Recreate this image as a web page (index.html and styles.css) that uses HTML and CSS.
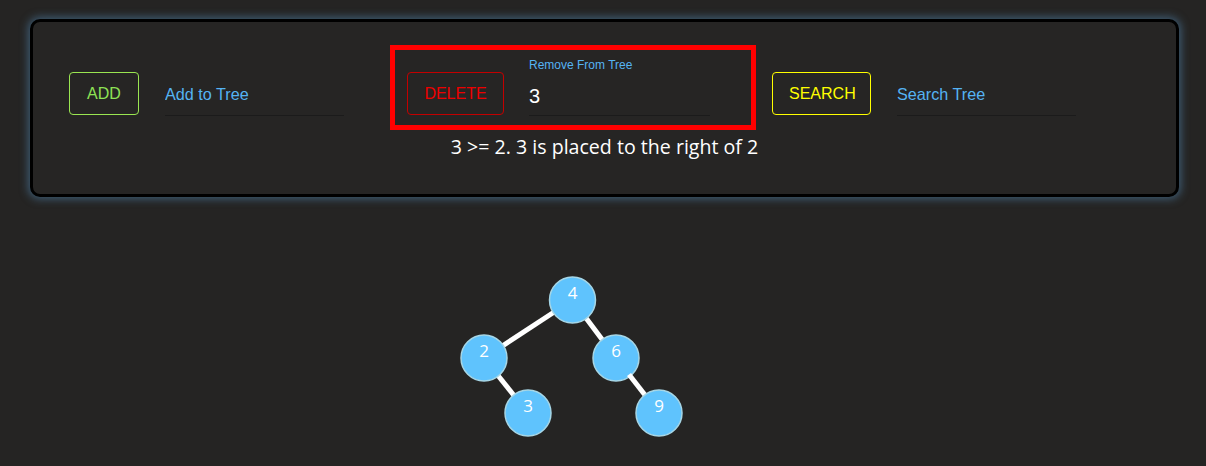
FILE: index.html
```html
<!DOCTYPE html>
<html>
<head>
<meta charset="utf-8">
<link rel="stylesheet" href="styles.css">
</head>
<body>
<div class="panel">
  <div class="controls">
    <div class="group">
      <button class="btn btn-add">ADD</button>
      <div class="field">
        <input class="field-input field-input-empty" type="text" placeholder="Add to Tree">
      </div>
    </div>
    <div class="group group-active">
      <button class="btn btn-delete">DELETE</button>
      <div class="field field-narrow">
        <label class="field-label">Remove From Tree</label>
        <input class="field-input" type="text" value="3">
      </div>
    </div>
    <div class="group group-search">
      <button class="btn btn-search">SEARCH</button>
      <div class="field">
        <input class="field-input field-input-empty" type="text" placeholder="Search Tree">
      </div>
    </div>
  </div>
  <p class="message">3 &gt;= 2. 3 is placed to the right of 2</p>
</div>
<svg class="tree" width="1206" height="269" viewBox="0 197 1206 269">
  <g class="edges">
    <line x1="572.5" y1="300" x2="484" y2="358"/>
    <line x1="572.5" y1="300" x2="616" y2="358"/>
    <line x1="484" y1="358" x2="528" y2="413"/>
  </g>
  <g class="node"><circle cx="572.5" cy="300" r="23"/><text x="572.5" y="299">4</text></g>
  <g class="node"><circle cx="484" cy="358" r="23"/><text x="484" y="356.5">2</text></g>
  <g class="node"><circle cx="528" cy="413" r="23"/><text x="528" y="411.5">3</text></g>
  <g class="node"><circle cx="616" cy="358" r="23"/><text x="616" y="356.5">6</text></g>
  <g class="edges"><line x1="629" y1="374.5" x2="659" y2="413"/></g>
  <g class="node"><circle cx="659" cy="413" r="23"/><text x="659" y="411.5">9</text></g>
</svg>
</body>
</html>
```
FILE: styles.css
```css
html, body {
  margin: 0;
  padding: 0;
  background: #252423;
  font-family: "Liberation Sans", Arial, sans-serif;
  overflow: hidden;
}

.panel {
  box-sizing: border-box;
  height: 178px;
  margin: 19px 27px 0 30px;
  border: 3px solid #000;
  border-radius: 10px;
  background: #262524;
  box-shadow: 0 0 9px 2px rgba(78, 128, 168, 0.6);
}

.controls {
  display: flex;
  gap: 10px;
  padding: 28px 0 0 24px;
}

.group {
  box-sizing: border-box;
  display: flex;
  align-items: flex-end;
  height: 75px;
  padding: 0 41px 9px 12px;
}

.group-active {
  outline: 5px solid #ff0000;
}

.group-search {
  margin-left: -1px;
}

.btn {
  box-sizing: border-box;
  height: 43px;
  margin: 0 0 1px;
  padding: 0 16px;
  border: 1px solid;
  border-radius: 4px;
  background: transparent;
  font-family: "Liberation Sans", Arial, sans-serif;
  font-size: 16px;
}

.btn-add {
  width: 70px;
  color: #8ee255;
  border-color: #9ae651;
}

.btn-delete {
  width: 97px;
  color: #ee0000;
  border-color: #c40000;
}

.btn-search {
  width: 99px;
  color: #ffff00;
  border-color: #ffff00;
}

.field {
  display: flex;
  flex-direction: column;
  width: 179px;
  margin-left: 26px;
  border-bottom: 1px solid #1b1b1b;
}

.field-narrow {
  width: 181px;
  margin-left: 25px;
}

.field-label {
  font-size: 12px;
  line-height: 14px;
  color: #55b3f3;
  margin-bottom: 10px;
}

.field-input {
  box-sizing: border-box;
  height: 33px;
  padding: 0 0 5px;
  border: none;
  outline: none;
  background: transparent;
  color: #ffffff;
  font-family: "Liberation Sans", Arial, sans-serif;
  font-size: 20px;
  line-height: 28px;
}

.field-input-empty {
  padding-bottom: 8px;
  font-size: 16.2px;
  line-height: normal;
}

.field-input::placeholder {
  color: #55b3f3;
  opacity: 1;
}

.message {
  margin: 10px 0 0;
  text-align: center;
  color: #ffffff;
  font-family: "Open Sans", sans-serif;
  font-size: 19.6px;
  line-height: 24px;
}

.tree {
  display: block;
}

.edges line {
  stroke: #ffffff;
  stroke-width: 5;
}

.node circle {
  fill: #5fc3fd;
  stroke: #a6d6e6;
  stroke-width: 1.5;
}

.node text {
  fill: #ffffff;
  font-family: "Open Sans", sans-serif;
  font-size: 17px;
  text-anchor: middle;
}
```
